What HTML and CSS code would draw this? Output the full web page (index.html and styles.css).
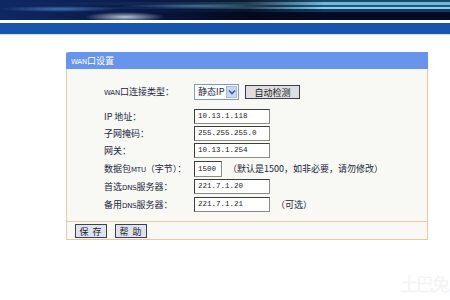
FILE: index.html
```html
<!DOCTYPE html>
<html lang="zh-CN">
<head>
<meta charset="utf-8">
<title>WAN口设置</title>
<link rel="stylesheet" href="styles.css">
</head>
<body>
<header class="banner"></header>
<div class="navbar"></div>
<main class="page">
  <section class="panel">
    <div class="panel-title"><span class="latin">WAN</span>口设置</div>
    <div class="form">
      <span class="label"><span class="latin">WAN</span>口连接类型：</span>
      <div class="field">
        <span class="select"><span class="select-text">静态IP</span><span class="select-arrow"><svg width="8" height="6" viewBox="0 0 8 6"><path d="M1 1.5 L4 4.5 L7 1.5" fill="none" stroke="#3a5fb0" stroke-width="1.6"/></svg></span></span>
        <span class="btn btn-detect">自动检测</span>
      </div>

      <span class="label">IP 地址：</span>
      <div class="field"><span class="input">10.13.1.118</span></div>

      <span class="label">子网掩码：</span>
      <div class="field"><span class="input">255.255.255.0</span></div>

      <span class="label">网关：</span>
      <div class="field"><span class="input">10.13.1.254</span></div>

      <span class="label">数据包<span class="latin">MTU</span>（字节）：</span>
      <div class="field"><span class="input input-short">1500</span><span class="note">（默认是1500，如非必要，请勿修改）</span></div>

      <span class="label">首选<span class="latin">DNS</span>服务器：</span>
      <div class="field"><span class="input">221.7.1.20</span></div>

      <span class="label">备用<span class="latin">DNS</span>服务器：</span>
      <div class="field"><span class="input">221.7.1.21</span><span class="note note-opt">（可选）</span></div>
    </div>
    <div class="panel-foot">
      <span class="btn btn-foot">保 存</span>
      <span class="btn btn-foot">帮 助</span>
    </div>
  </section>
</main>
<div class="watermark">土巴兔</div>
</body>
</html>
```

FILE: styles.css
```css
html, body {
  margin: 0;
  padding: 0;
  background: #ffffff;
  width: 450px;
  height: 300px;
  overflow: hidden;
  font-family: "Noto Sans CJK SC", "DejaVu Sans", sans-serif;
  color: #22263a;
}

.banner {
  height: 20px;
  background:
    radial-gradient(ellipse 40px 5px at 125px 17px, rgba(215,225,235,0.85), rgba(215,225,235,0) 100%),
    radial-gradient(ellipse 60px 3px at 60px 9px, rgba(90,140,210,0.7), rgba(90,140,210,0) 100%),
    radial-gradient(ellipse 80px 2px at 200px 6px, rgba(120,190,220,0.6), rgba(120,190,220,0) 100%),
    linear-gradient(to right, rgba(14,40,100,1) 0%, rgba(8,22,66,0.9) 35%, rgba(3,8,25,0.7) 55%, rgba(3,8,25,0) 72%),
    linear-gradient(to bottom, #1b4a66 0, #1b4a66 2px, #6fb9dc 2px, #6fb9dc 5px, #1f5a78 5px, #1f5a78 7px, #8ad0ec 7px, #8ad0ec 9px, #133a60 9px, #133a60 12px, #050a25 12px, #050a25 20px);
}

.navbar {
  margin-top: 3px;
  height: 11px;
  background: #1656ae;
  border-bottom: 1px solid #cfe0f5;
}

.page {
  padding: 17px 0 0 66px;
}

.panel {
  width: 362px;
  box-sizing: border-box;
  background: #f8f8f5;
  border: 1px solid #e6c9a3;
  border-top: none;
}

.panel-title {
  height: 17px;
  margin: 0 -1px;
  padding-left: 5px;
  background: #6795ee;
  border-radius: 3px 0 0 0;
  color: #ffffff;
  font-size: 9px;
  line-height: 17px;
}

.latin {
  font-family: "DejaVu Sans", sans-serif;
  font-size: 7px;
  letter-spacing: -0.2px;
}

.form {
  display: grid;
  grid-template-columns: 90px auto;
  grid-template-rows: 25px 17px 17px 18px 18px 18px 15px;
  padding: 15px 0 9px 37px;
  align-items: start;
}

.label {
  font-size: 9px;
  line-height: 15px;
  white-space: nowrap;
}

.form > .label:first-child {
  line-height: 16px;
}

.field {
  display: flex;
  align-items: flex-start;
}

.select {
  display: flex;
  align-items: center;
  justify-content: space-between;
  box-sizing: border-box;
  width: 45px;
  height: 16px;
  background: #ffffff;
  border: 1px solid #7f9db9;
  padding: 0 1px 0 3px;
  font-size: 9px;
}

.select-text {
  line-height: 14px;
}

.select-arrow {
  display: flex;
  align-items: center;
  justify-content: center;
  width: 11px;
  height: 12px;
  background: #c9d8f4;
  border: 1px solid #aabbe0;
  box-sizing: border-box;
}

.btn {
  display: inline-flex;
  align-items: center;
  justify-content: center;
  box-sizing: border-box;
  font-size: 9px;
  color: #222;
}

.btn-detect {
  margin: 1px 0 0 6px;
  width: 55px;
  height: 14px;
  background: #dedede;
  border: 1px solid #3c3c50;
}

.input {
  display: inline-block;
  box-sizing: border-box;
  width: 76px;
  height: 15px;
  background: #ffffff;
  border: 1px solid;
  border-color: #3d3d3d #8a8a8a #8a8a8a #3d3d3d;
  padding-left: 3px;
  font-family: "Liberation Mono", monospace;
  font-size: 7.5px;
  line-height: 13px;
  color: #222;
}

.input-short {
  width: 28px;
  height: 16px;
  line-height: 14px;
}

.note {
  margin-left: 6px;
  font-size: 9px;
  line-height: 16px;
  white-space: nowrap;
}

.note-opt {
  line-height: 15px;
}

.panel-foot {
  display: flex;
  gap: 8px;
  height: 18px;
  padding: 2px 0 0 8px;
  box-sizing: border-box;
  border-top: 1px solid #e6c9a3;
}

.btn-foot {
  width: 32px;
  height: 14px;
  background: #dfe3ef;
  border: 1px solid #404050;
  letter-spacing: 1px;
}

.watermark {
  position: absolute;
  right: 2px;
  bottom: 4px;
  font-size: 18px;
  color: #f3f3f3;
  letter-spacing: -2px;
}
```
